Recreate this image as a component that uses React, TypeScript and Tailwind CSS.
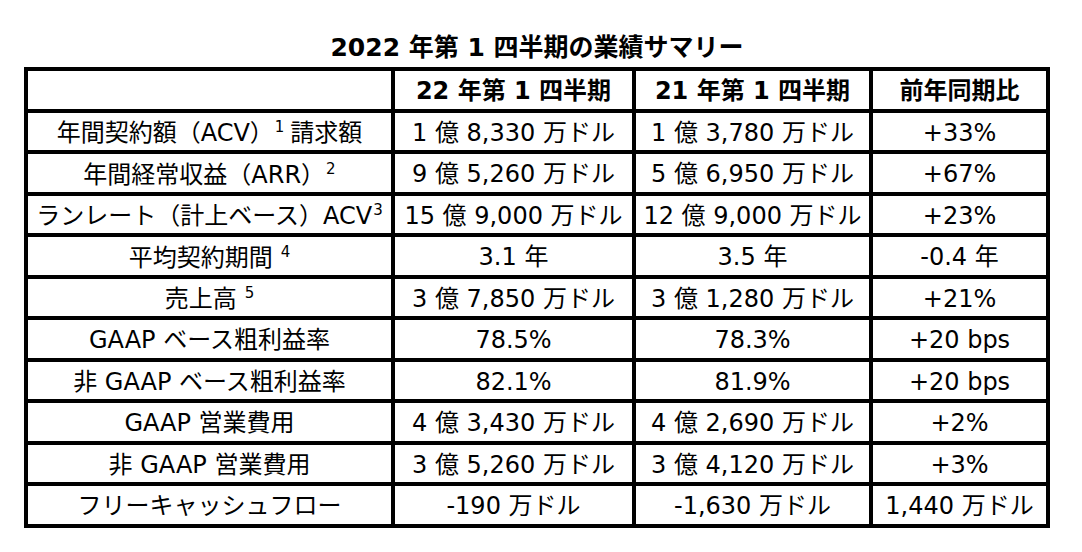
import React from "react";

type Row = {
  label: React.ReactNode;
  q22: string;
  q21: string;
  yoy: string;
};

function Sup({ n, gap = true }: { n: string; gap?: boolean }) {
  return (
    <span className={`text-[15px] align-super leading-none ${gap ? "ml-[8px]" : "ml-[1px]"}`}>
      {n}
    </span>
  );
}

const rows: Row[] = [
  {
    label: (
      <>
        年間契約額（ACV）
        <Sup n="1" gap={false} />
        <span className="ml-[6px]">請求額</span>
      </>
    ),
    q22: "1 億 8,330 万ドル",
    q21: "1 億 3,780 万ドル",
    yoy: "+33%",
  },
  {
    label: (
      <>
        年間経常収益（ARR）
        <Sup n="2" gap={false} />
      </>
    ),
    q22: "9 億 5,260 万ドル",
    q21: "5 億 6,950 万ドル",
    yoy: "+67%",
  },
  {
    label: (
      <>
        ランレート（計上ベース）ACV
        <Sup n="3" gap={false} />
      </>
    ),
    q22: "15 億 9,000 万ドル",
    q21: "12 億 9,000 万ドル",
    yoy: "+23%",
  },
  {
    label: (
      <>
        平均契約期間
        <Sup n="4" />
      </>
    ),
    q22: "3.1 年",
    q21: "3.5 年",
    yoy: "-0.4 年",
  },
  {
    label: (
      <>
        売上高
        <Sup n="5" />
      </>
    ),
    q22: "3 億 7,850 万ドル",
    q21: "3 億 1,280 万ドル",
    yoy: "+21%",
  },
  { label: "GAAP ベース粗利益率", q22: "78.5%", q21: "78.3%", yoy: "+20 bps" },
  { label: "非 GAAP ベース粗利益率", q22: "82.1%", q21: "81.9%", yoy: "+20 bps" },
  { label: "GAAP 営業費用", q22: "4 億 3,430 万ドル", q21: "4 億 2,690 万ドル", yoy: "+2%" },
  { label: "非 GAAP 営業費用", q22: "3 億 5,260 万ドル", q21: "3 億 4,120 万ドル", yoy: "+3%" },
  { label: "フリーキャッシュフロー", q22: "-190 万ドル", q21: "-1,630 万ドル", yoy: "1,440 万ドル" },
];

function Cell({ children, bold = false }: { children?: React.ReactNode; bold?: boolean }) {
  return (
    <div
      className={`bg-white flex items-center justify-center whitespace-nowrap text-[24px] leading-none pt-[3px] ${
        bold ? "font-bold" : ""
      }`}
    >
      <span>{children}</span>
    </div>
  );
}

export default function App() {
  return (
    <div
      className="w-[1082px] h-[552px] bg-white text-black"
      style={{ fontFamily: '"DejaVu Sans", "Noto Sans CJK JP", sans-serif' }}
    >
      <div className="w-[1026px] ml-[24px] pt-[33px]">
        <h1 className="text-center text-[25px] font-bold leading-[30px] mb-[4px]">
          2022 年第 1 四半期の業績サマリー
        </h1>
        <div className="grid grid-cols-[363px_237px_233px_173px] auto-rows-[37.5px] gap-[4px] bg-black p-[4px]">
          <Cell />
          <Cell bold>22 年第 1 四半期</Cell>
          <Cell bold>21 年第 1 四半期</Cell>
          <Cell bold>前年同期比</Cell>
          {rows.map((r, i) => (
            <React.Fragment key={i}>
              <Cell>{r.label}</Cell>
              <Cell>{r.q22}</Cell>
              <Cell>{r.q21}</Cell>
              <Cell>{r.yoy}</Cell>
            </React.Fragment>
          ))}
        </div>
      </div>
    </div>
  );
}
